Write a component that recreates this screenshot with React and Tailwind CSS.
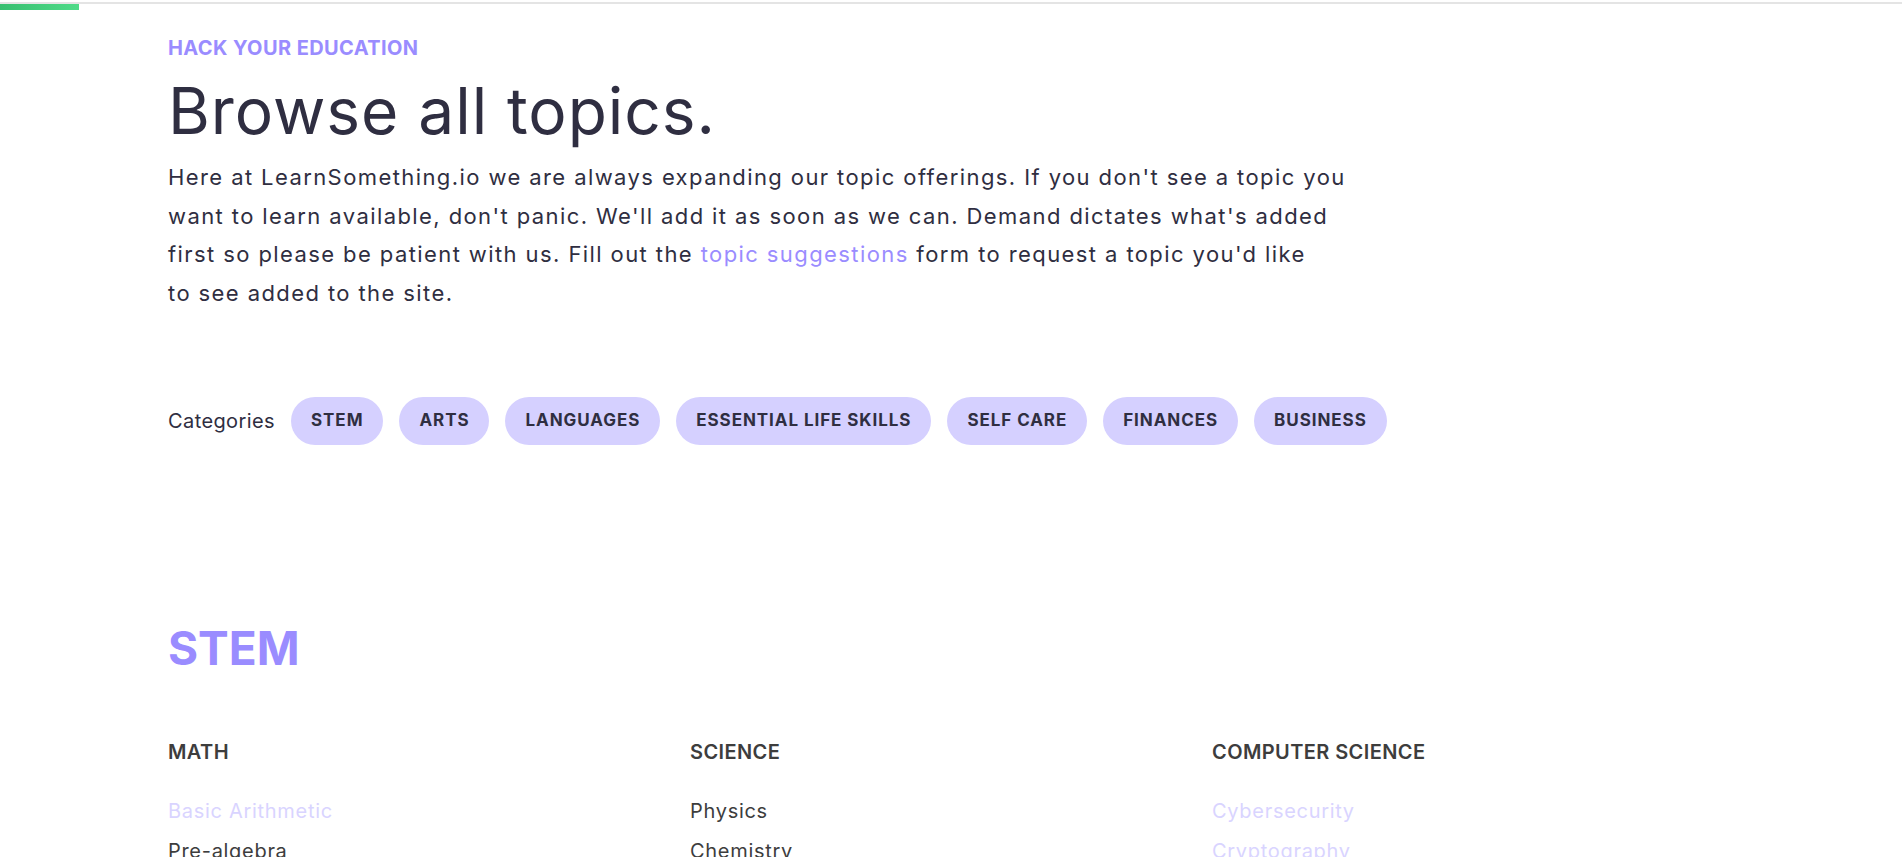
import React from 'react';

const categories = ['STEM', 'ARTS', 'LANGUAGES', 'ESSENTIAL LIFE SKILLS', 'SELF CARE', 'FINANCES', 'BUSINESS'];

const columns = [
  {
    title: 'MATH',
    topics: [
      { name: 'Basic Arithmetic', soon: true },
      { name: 'Pre-algebra' },
      { name: 'Algebra' },
    ],
  },
  {
    title: 'SCIENCE',
    topics: [{ name: 'Physics' }, { name: 'Chemistry' }, { name: 'Biology' }],
  },
  {
    title: 'COMPUTER SCIENCE',
    topics: [
      { name: 'Cybersecurity', soon: true },
      { name: 'Cryptography', soon: true },
      { name: 'Programming' },
    ],
  },
];

const App = () => {
  return (
    <div className="min-h-screen bg-white font-['Inter',sans-serif] text-[#2f2e41]">
      {/* reading progress */}
      <div className="h-[2px]" />
      <div className="h-[2px] bg-[#e4e4e4]" />
      <div className="h-[6px] w-[79px] bg-gradient-to-r from-[#37bf70] to-[#4fdb88]" />

      <main className="px-[168px]">
        <p className="mt-[26px] text-[20px] leading-[24px] font-bold tracking-[0.02em] text-[#9a8cff]">
          HACK YOUR EDUCATION
        </p>
        <h1 className="mt-[15px] text-[64px] leading-[72px] font-normal tracking-[0.015em]">Browse all topics.</h1>
        <p className="mt-[11px] max-w-[1180px] text-[22px] leading-[38.5px] tracking-[0.064em]">
          Here at LearnSomething.io we are always expanding our topic offerings. If you don't see a topic you
          want to learn available, don't panic. We'll add it as soon as we can. Demand dictates what's added
          first so please be patient with us. Fill out the{' '}
          <a href="#" className="text-[#9a8cff]">topic suggestions</a> form to request a topic you'd like
          <br />
          to see added to the site.
        </p>

        <div className="mt-[85px] flex items-center gap-4">
          <span className="text-[20px] tracking-[0.02em]">Categories</span>
          {categories.map((c) => (
            <button
              key={c}
              className="h-12 rounded-full bg-[#d5d0ff] px-5 text-[17px] font-bold tracking-[0.055em] text-[#2f2e41]"
            >
              {c}
            </button>
          ))}
        </div>

        <section className="mt-[175px]">
          <h2 className="text-[46px] leading-[56px] font-bold text-[#9a8cff]">STEM</h2>
          <div className="mt-[64px] grid grid-cols-3">
            {columns.map((col) => (
              <div key={col.title}>
                <h3 className="text-[20px] leading-[24px] font-semibold tracking-[0.02em] text-[#3d3d3d]">
                  {col.title}
                </h3>
                <ul className="mt-[27px]">
                  {col.topics.map((t) => (
                    <li
                      key={t.name}
                      className={`text-[20px] leading-[40px] tracking-[0.035em] ${t.soon ? 'text-[#d9d4ff]' : 'text-[#3d3d3d]'}`}
                    >
                      {t.name}
                    </li>
                  ))}
                </ul>
              </div>
            ))}
          </div>
        </section>
      </main>
    </div>
  );
};

export default App;
